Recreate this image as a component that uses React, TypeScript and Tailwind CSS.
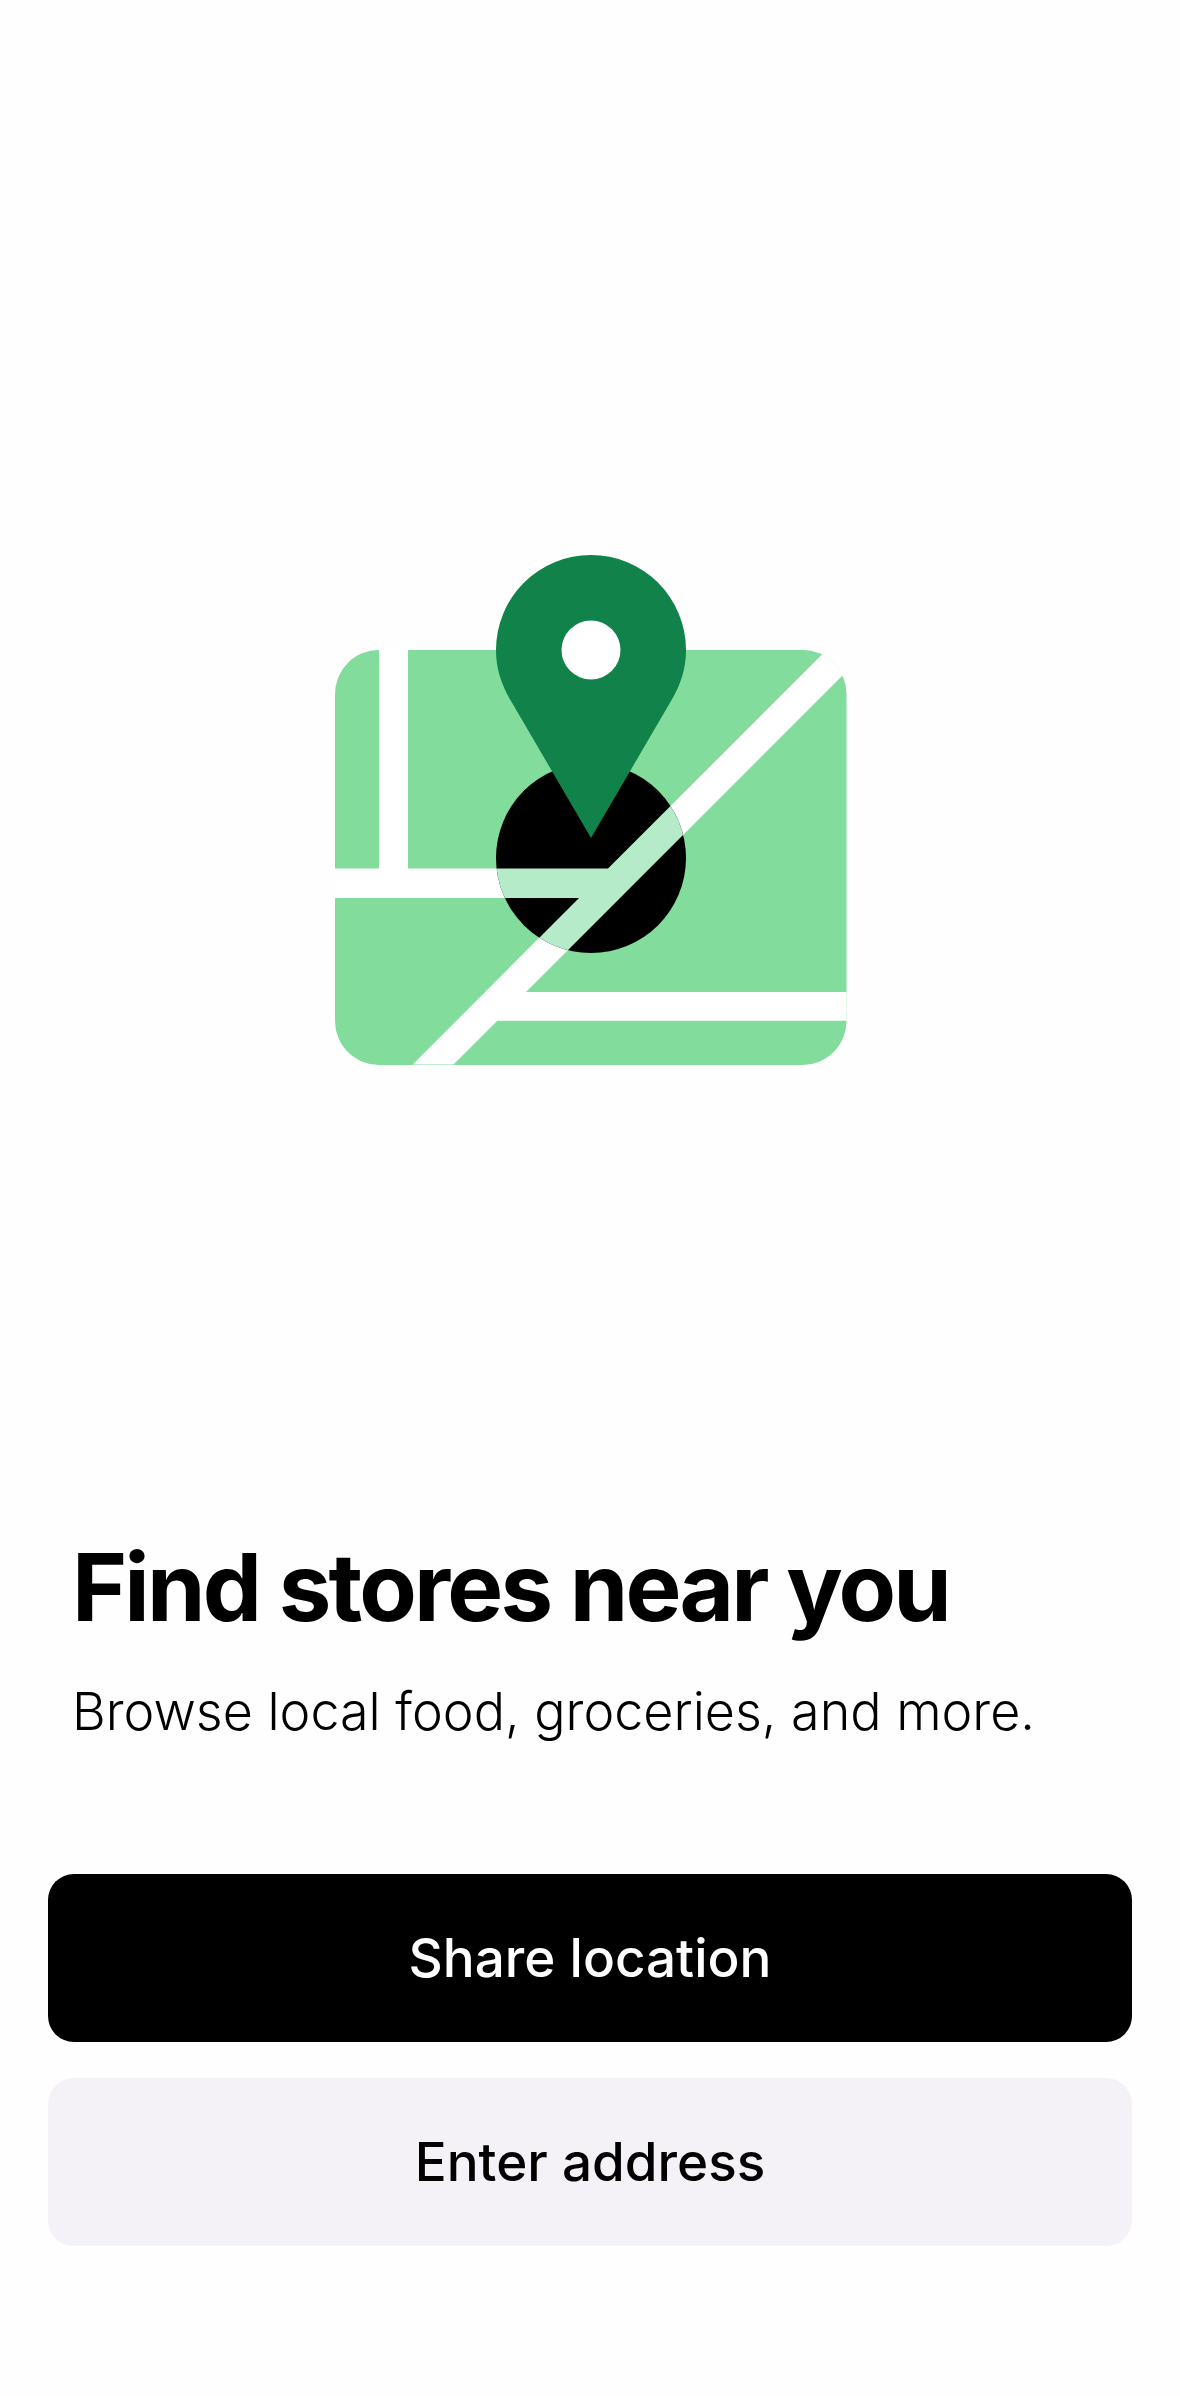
export default function App() {
  return (
    <div className="flex h-[2396px] w-[1180px] flex-col overflow-hidden bg-[#fefefe] font-['Inter',sans-serif] text-black">
      <div className="flex h-[1500px] items-start justify-center pt-[540px]">
        <svg width="580" height="540" viewBox="300 540 580 540" className="block">
          <defs>
            <clipPath id="map">
              <rect x="335" y="650" width="511.5" height="415" rx="44" />
            </clipPath>
            <clipPath id="dot">
              <circle cx="591" cy="858" r="95" />
            </clipPath>
            <path
              id="roads"
              d="M379 640H408V868.6H608L830 646.500L870 646.500V648L453.500 1064.600H412.600L579 898H325V868.600H379ZM526 992H860V1020.700H497Z"
            />
          </defs>
          <g clipPath="url(#map)">
            <rect x="335" y="650" width="512" height="415" fill="#82DC9B" />
            <use href="#roads" fill="#ffffff" />
            <path d="M822 655L880 640V660L842.500 676.500Z" fill="#ffffff" />
          </g>
          <g clipPath="url(#dot)">
            <rect x="490" y="750" width="200" height="210" fill="#000000" />
            <use href="#roads" fill="#B6EBC9" />
          </g>
          <path
            d="M591 838L511 701C501 684 496 668 496 650A95 95 0 0 1 686 650C686 668 681 684 671 701Z"
            fill="#11824A"
          />
          <circle cx="591" cy="650" r="29.500" fill="#ffffff" />
        </svg>
      </div>
      <div className="mt-[37px] pl-[72px]">
        <h1 className="text-[94px] leading-[100px] font-bold tracking-[-2.8px]">Find stores near you</h1>
        <p className="mt-[45px] text-[52px] leading-[60px] font-light tracking-[0px]">
          Browse local food, groceries, and more.
        </p>
      </div>
      <div className="mt-[132px] flex flex-col gap-[36px] px-[48px]">
        <button className="h-[168px] w-[1084px] rounded-[26px] bg-black pt-[2px] text-[53px] font-medium text-white">
          Share location
        </button>
        <button className="h-[168px] w-[1084px] rounded-[26px] bg-[#f4f2f6] pt-[2px] text-[53px] font-medium text-black">
          Enter address
        </button>
      </div>
    </div>
  );
}
